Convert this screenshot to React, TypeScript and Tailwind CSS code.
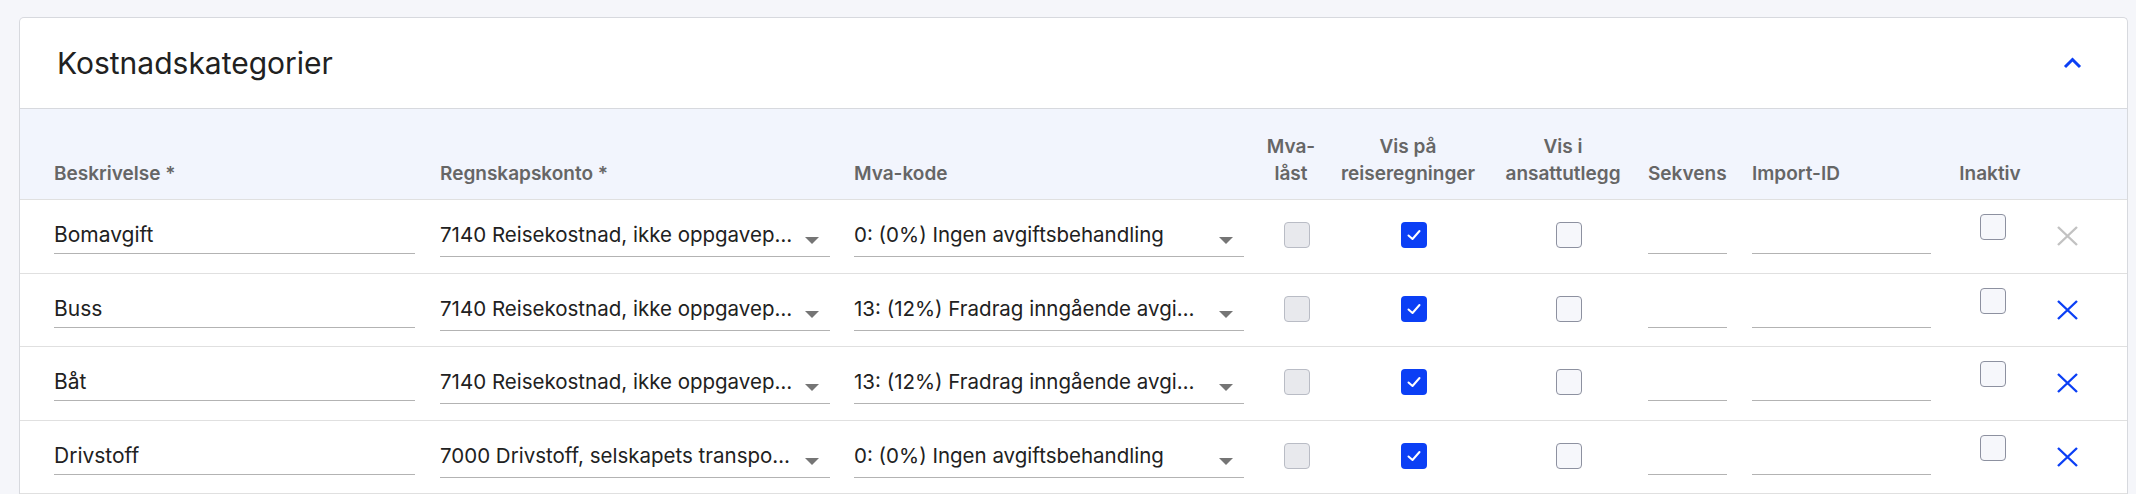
type Row = {
  name: string;
  account: string;
  vat: string;
  removable: boolean;
};

const rows: Row[] = [
  { name: "Bomavgift", account: "7140 Reisekostnad, ikke oppgavep…", vat: "0: (0%) Ingen avgiftsbehandling", removable: false },
  { name: "Buss", account: "7140 Reisekostnad, ikke oppgavep…", vat: "13: (12%) Fradrag inngående avgi…", removable: true },
  { name: "Båt", account: "7140 Reisekostnad, ikke oppgavep…", vat: "13: (12%) Fradrag inngående avgi…", removable: true },
  { name: "Drivstoff", account: "7000 Drivstoff, selskapets transpo…", vat: "0: (0%) Ingen avgiftsbehandling", removable: true },
];

const cols = "grid grid-cols-[361px_415px_414px_94px_140px_170px_79px_204px_118px_37px] pl-[34px]";

function TextField({ value }: { value: string }) {
  return (
    <div className="mt-[22px] h-[32px] border-b border-[#b3b3b3] text-[21px] leading-[25px] text-[#212121]">
      {value}
    </div>
  );
}

function SelectField({ value }: { value: string }) {
  return (
    <div className="mt-[22px] flex h-[35px] items-start border-b border-[#b3b3b3] pr-[11px]">
      <span className="flex-1 truncate text-[20.5px] leading-[25px] text-[#212121]">{value}</span>
      <svg width="14" height="7" viewBox="0 0 14 7" className="ml-[10px] mt-[15px] shrink-0">
        <polygon points="0,0 14,0 7,7" fill="#757575" />
      </svg>
    </div>
  );
}

function Checkbox({ variant }: { variant: "disabled" | "checked" | "empty" }) {
  if (variant === "checked") {
    return (
      <div className="flex h-[26px] w-[26px] items-center justify-center rounded-[4px] bg-[#0b3ff5]">
        <svg width="18" height="18" viewBox="0 0 18 18">
          <polyline points="3.5,9.5 7.5,13 14.5,5" fill="none" stroke="white" strokeWidth="2" strokeLinecap="round" strokeLinejoin="round" />
        </svg>
      </div>
    );
  }
  if (variant === "disabled") {
    return <div className="h-[26px] w-[26px] rounded-[4px] border border-[#b9bcc5] bg-[#e8e9ed]" />;
  }
  return <div className="h-[26px] w-[26px] rounded-[4px] border border-[#8d91a0] bg-[#f6f7fb]" />;
}

function CloseIcon({ active }: { active: boolean }) {
  return (
    <svg width="21" height="20" viewBox="0 0 21 20" className={active ? "text-[#0b3ff5]" : "text-[#c2c2c2]"}>
      <path d="M1 1 L20 19 M20 1 L1 19" stroke="currentColor" strokeWidth="2.4" fill="none" />
    </svg>
  );
}

export default function App() {
  return (
    <div className="min-h-screen bg-[#f5f6fa] pl-[19px] pr-[8px] pt-[17px] font-['Inter',sans-serif]">
      <div className="overflow-hidden rounded-t-[5px] border border-b-0 border-[#d7d9de] bg-white">
        <div className="flex h-[91px] items-center justify-between border-b border-[#d7d9de] pl-[37px] pr-[45px]">
          <h2 className="text-[30px] font-normal text-[#212121]">Kostnadskategorier</h2>
          <svg width="19" height="12" viewBox="0 0 19 12">
            <polyline points="2,10 9.5,2.5 17,10" fill="none" stroke="#0b3ff5" strokeWidth="3" />
          </svg>
        </div>

        <div className={`${cols} h-[91px] items-end border-b border-[#e0e0e0] bg-[#f2f5fd] pb-[12px] text-[19px] font-semibold leading-[27px] text-[#666666]`}>
          <div>Beskrivelse *</div>
          <div className="pl-[25px]">Regnskapskonto *</div>
          <div className="pl-[24px]">Mva-kode</div>
          <div className="text-center">Mva-<br />låst</div>
          <div className="text-center">Vis på<br />reiseregninger</div>
          <div className="text-center">Vis i<br />ansattutlegg</div>
          <div>Sekvens</div>
          <div className="pl-[25px]">Import-ID</div>
          <div className="text-center">Inaktiv</div>
          <div />
        </div>

        {rows.map((row) => (
          <div key={row.name} className={`${cols} h-[73.5px] items-start border-b border-[#e0e0e0]`}>
            <TextField value={row.name} />
            <div className="pl-[25px]">
              <SelectField value={row.account} />
            </div>
            <div className="pl-[24px]">
              <SelectField value={row.vat} />
            </div>
            <div className="mt-[22px] flex justify-center pl-[12px]">
              <Checkbox variant="disabled" />
            </div>
            <div className="mt-[22px] flex justify-center pl-[12px]">
              <Checkbox variant="checked" />
            </div>
            <div className="mt-[22px] flex justify-center pl-[12px]">
              <Checkbox variant="empty" />
            </div>
            <TextField value="" />
            <div className="pl-[25px]">
              <TextField value="" />
            </div>
            <div className="mt-[14px] flex justify-center pl-[6px]">
              <Checkbox variant="empty" />
            </div>
            <div className="mt-[26px] flex justify-center">
              <CloseIcon active={row.removable} />
            </div>
          </div>
        ))}
      </div>
    </div>
  );
}
